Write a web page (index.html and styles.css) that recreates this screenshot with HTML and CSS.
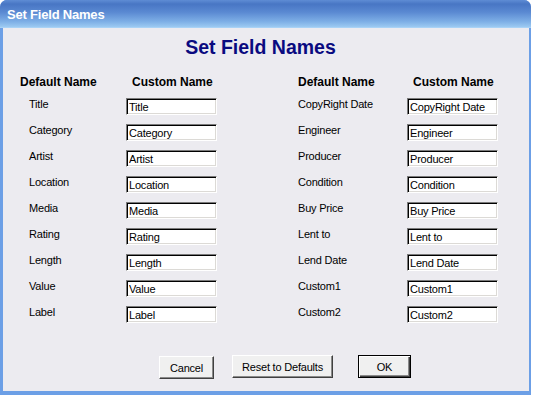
FILE: index.html
```html
<!DOCTYPE html>
<html lang="en">
<head>
  <meta charset="UTF-8">
  <meta name="viewport" content="width=device-width, initial-scale=1.0">
  <title>Set Field Names</title>
  <link rel="stylesheet" href="styles.css">
</head>

<body>
  <div class="window">
    <div class="titlebar">Set Field Names</div>

    <div class="client">
      <h1>Set Field Names</h1>

      <div class="fields">
        <div class="group left">
          <div class="head">Default Name</div>
          <div class="head custom">Custom Name</div>

          <label>Title</label><input type="text" value="Title">
          <label>Category</label><input type="text" value="Category">
          <label>Artist</label><input type="text" value="Artist">
          <label>Location</label><input type="text" value="Location">
          <label>Media</label><input type="text" value="Media">
          <label>Rating</label><input type="text" value="Rating">
          <label>Length</label><input type="text" value="Length">
          <label>Value</label><input type="text" value="Value">
          <label>Label</label><input type="text" value="Label">
        </div>

        <div class="group right">
          <div class="head">Default Name</div>
          <div class="head custom">Custom Name</div>

          <label>CopyRight Date</label><input type="text" value="CopyRight Date">
          <label>Engineer</label><input type="text" value="Engineer">
          <label>Producer</label><input type="text" value="Producer">
          <label>Condition</label><input type="text" value="Condition">
          <label>Buy Price</label><input type="text" value="Buy Price">
          <label>Lent to</label><input type="text" value="Lent to">
          <label>Lend Date</label><input type="text" value="Lend Date">
          <label>Custom1</label><input type="text" value="Custom1">
          <label>Custom2</label><input type="text" value="Custom2">
        </div>
      </div>

      <div class="buttons">
        <button class="cancel">Cancel</button>
        <button class="reset">Reset to Defaults</button>
        <button class="ok">OK</button>
      </div>
    </div>
  </div>
</body>
</html>
```

FILE: styles.css
```css
/* Global Styles */
body {
  margin: 0;
  background: #ffffff;
  font-family: 'Liberation Sans', Arial, sans-serif;
  overflow: hidden;
}

/* Window frame */
.window {
  width: 526px;
  height: 391px;
  display: flex;
  flex-direction: column;
  border-left: 3px solid #6c9fe6;
  border-right: 2px solid #6c9fe6;
  border-bottom: 4px solid #6c9fe6;
  border-radius: 7px 7px 0 0;
  box-shadow: inset 1px 0 #3f6fc2;
  background: #6c9fe6;
}

.titlebar {
  height: 27px;
  margin: 0 -2px 0 -3px;
  padding-left: 7px;
  border-radius: 7px 7px 0 0;
  border-bottom: 1px solid #a9d2f6;
  background: linear-gradient(180deg, #5e8cd4 0%, #4876c4 15%, #5a89d2 45%, #7eafe6 80%, #9ccaf2 100%);
  color: #ffffff;
  font-size: 13px;
  font-weight: bold;
  letter-spacing: -0.2px;
  line-height: 29px;
}

.client {
  flex: 1;
  background: #ecebf0;
}

h1 {
  margin: 0;
  padding: 8px 11px 0 0;
  text-align: center;
  color: #0a0a80;
  font-size: 19.5px;
  line-height: 22px;
}

/* Field grid */
.fields {
  display: flex;
  gap: 81px;
  margin-top: 15px;
  padding-left: 17px;
}

.group {
  display: grid;
  grid-auto-rows: 26px;
  grid-template-rows: 20px;
}

.group.left {
  grid-template-columns: 106px 91px;
}

.group.right {
  grid-template-columns: 109px 91px;
}

.head {
  font-size: 12px;
  font-weight: bold;
  line-height: 18px;
}

.head.custom {
  padding-left: 6px;
}

label {
  font-size: 11px;
  letter-spacing: -0.2px;
  line-height: 23px;
}

.left label {
  padding-left: 9px;
}

input {
  box-sizing: border-box;
  width: 91px;
  height: 17px;
  margin: 5px 0 0 0;
  padding: 0 0 0 2px;
  border: 1px solid;
  border-color: #7a7a7a #ffffff #ffffff #7a7a7a;
  box-shadow: inset 1px 1px #000000, inset -1px -1px #dcdad6;
  background: #ffffff;
  color: #000000;
  font-family: 'Liberation Sans', Arial, sans-serif;
  font-size: 11px;
  letter-spacing: -0.2px;
  outline: none;
}

/* Buttons */
.buttons {
  display: flex;
  align-items: flex-start;
  margin-top: 28px;
  padding-left: 156px;
}

button {
  box-sizing: border-box;
  height: 23px;
  padding: 0;
  border: 1px solid;
  border-color: #ffffff #404040 #404040 #ffffff;
  box-shadow: inset -1px -1px #8a8a8a;
  background: #f0f0f0;
  color: #000000;
  font-family: 'Liberation Sans', Arial, sans-serif;
  font-size: 11px;
  letter-spacing: -0.2px;
}

.cancel {
  width: 55px;
  margin-top: 1px;
}

.reset {
  width: 101px;
  margin-left: 18px;
}

.ok {
  width: 53px;
  margin-left: 25px;
  border: 1px solid #000000;
  box-shadow: inset 1px 1px #ffffff, inset -1px -1px #404040, inset -2px -2px #8a8a8a;
}
```
